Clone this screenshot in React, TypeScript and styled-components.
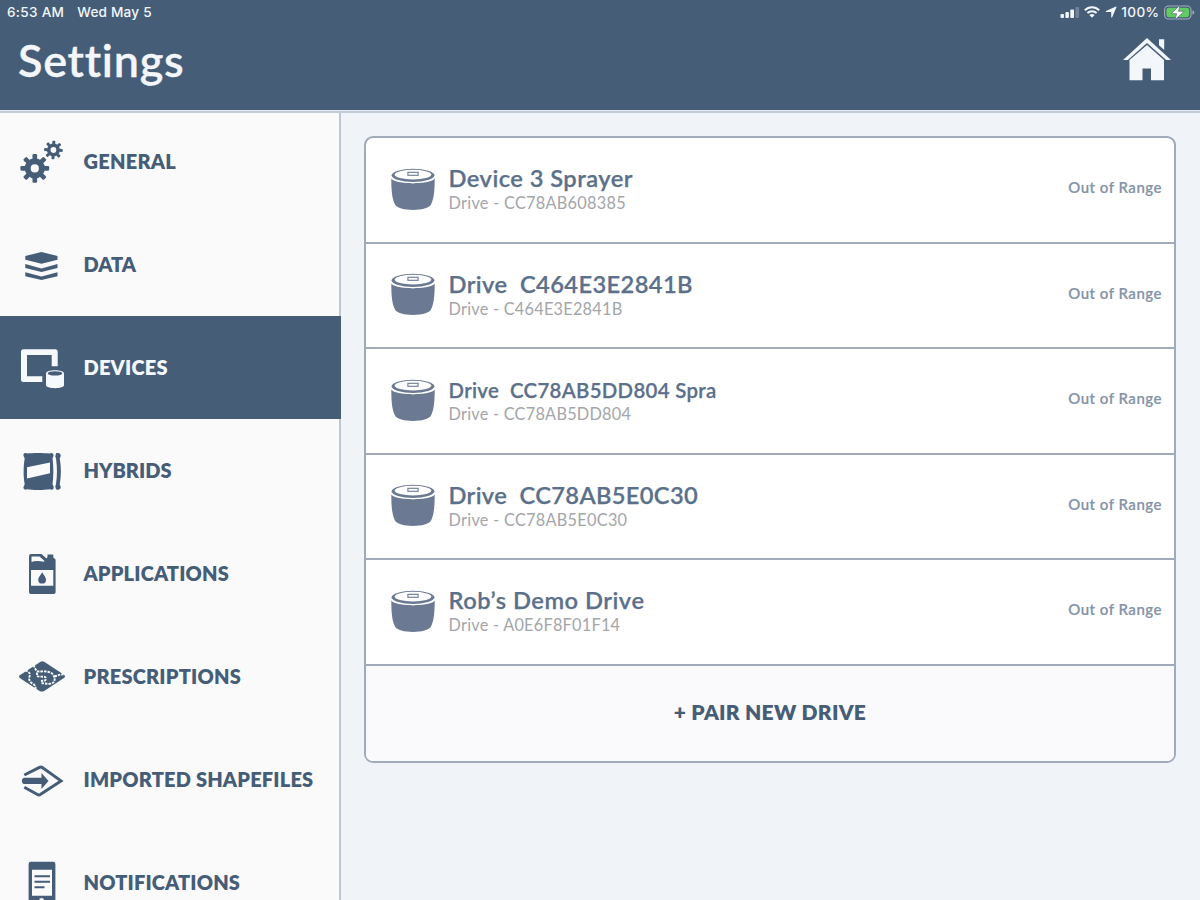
import React from "react";
import styled, { createGlobalStyle } from "styled-components";

const navy = "#465d78";
const slate = "#5b708b";
const line = "#a0aaba";

const GlobalStyle = createGlobalStyle`
  * { box-sizing: border-box; }
  html, body { margin: 0; padding: 0; }
  body { overflow: hidden; font-family: Lato, "Open Sans", sans-serif; }
  svg { display: block; }
`;

const Screen = styled.div`
  width: 1200px;
  height: 900px;
  display: flex;
  flex-direction: column;
  overflow: hidden;
  background: #f0f4f8;
`;

const Header = styled.header`
  position: relative;
  z-index: 1;
  flex: none;
  height: 110px;
  background: ${navy};
  color: #f3f7fc;
  box-shadow: 0 1px 0 #e6ebf2, 0 3px 0 #c3cbd6;
`;

const StatusBar = styled.div`
  height: 24px;
  padding: 0 5px 0 7px;
  display: flex;
  align-items: center;
  justify-content: space-between;
  font-family: Inter, "Liberation Sans", sans-serif;
  font-size: 13.6px;
  line-height: 24px;
  font-weight: 450;
`;

const StatusGroup = styled.div<{ $gap: number }>`
  display: flex;
  align-items: center;
  gap: ${(p) => p.$gap}px;
  white-space: pre;
`;

const StatusText = styled.span<{ $spacing: number }>`
  letter-spacing: ${(p) => p.$spacing}px;
`;

const TitleBar = styled.div`
  height: 72px;
  padding: 0 29px 0 18px;
  display: flex;
  align-items: center;
  justify-content: space-between;
`;

const Title = styled.h1`
  margin: 0;
  font-size: 45px;
  line-height: 73px;
  height: 73px;
  font-weight: 600;
  letter-spacing: 0.7px;
  -webkit-text-stroke: 0.3px currentColor;
`;

const Body = styled.div`
  flex: 1;
  min-height: 0;
  display: flex;
`;

const Sidebar = styled.nav`
  flex: none;
  width: 341px;
  height: 790px;
  overflow: hidden;
  background: linear-gradient(to right, #fafafb 339px, #bec7d3 339px);
`;

const NavItem = styled.div<{ $active?: boolean }>`
  height: 103.1px;
  padding-left: 17px;
  display: flex;
  align-items: center;
  gap: 18.5px;
  background: ${(p) => (p.$active ? navy : "transparent")};
  color: ${(p) => (p.$active ? "#f6f9fd" : navy)};
`;

const NavLabel = styled.span<{ $spacing: number }>`
  padding-bottom: 1.5px;
  font-size: 20px;
  line-height: 24px;
  font-weight: 800;
  white-space: nowrap;
  letter-spacing: ${(p) => p.$spacing}px;
`;

const Main = styled.main`
  flex: 1;
  padding: 26px 24px 0 23px;
`;

const Card = styled.section`
  height: 627px;
  border: 2px solid ${line};
  border-radius: 9px;
  overflow: hidden;
  background: #fff;
`;

const DriveRow = styled.div`
  height: 105.5px;
  padding: 0 12px 0 25px;
  display: flex;
  align-items: center;
  border-bottom: 2px solid ${line};
`;

const DriveText = styled.div`
  flex: 1;
  margin-left: 13.5px;
  padding-bottom: 1px;
`;

const DriveName = styled.div<{ $small?: boolean; $spacing: number }>`
  height: 28px;
  line-height: ${(p) => (p.$small ? 29 : 26)}px;
  font-size: ${(p) => (p.$small ? 20.4 : 23.7)}px;
  font-weight: 600;
  letter-spacing: ${(p) => p.$spacing}px;
  -webkit-text-stroke: 0.25px currentColor;
  color: ${slate};
  white-space: pre;
`;

const DriveId = styled.div<{ $spacing: number }>`
  height: 20px;
  line-height: 20px;
  font-size: 16.3px;
  letter-spacing: ${(p) => p.$spacing}px;
  color: #a3a6aa;
`;

const DriveStatus = styled.div`
  padding-bottom: 5.5px;
  font-size: 15px;
  line-height: 20px;
  font-weight: 600;
  letter-spacing: 0.5px;
  -webkit-text-stroke: 0.15px currentColor;
  color: #8593a8;
`;

const PairButton = styled.div`
  height: 96px;
  padding-bottom: 3.5px;
  display: flex;
  align-items: center;
  justify-content: center;
  background: #fafafc;
  color: ${navy};
  font-size: 21px;
  font-weight: 800;
  letter-spacing: 0.25px;
`;

const Gear = ({ x, y, r, hole, turn }: { x: number; y: number; r: number; hole: number; turn: number }) => {
  const body = r * 0.7;
  return (
    <g transform={`translate(${x} ${y}) rotate(${turn})`}>
      <circle r={(body + hole) / 2} fill="none" stroke="currentColor" strokeWidth={body - hole} />
      {[0, 45, 90, 135, 180, 225, 270, 315].map((a) => (
        <rect key={a} x={-r * 0.16} y={-r} width={r * 0.32} height={r * 0.4} rx={r * 0.08} fill="currentColor" transform={`rotate(${a})`} />
      ))}
    </g>
  );
};

const icons: Record<string, React.ReactNode> = {
  general: (
    <>
      <Gear x={17.8} y={30.4} r={14.4} hole={4.1} turn={0} />
      <Gear x={36.4} y={12} r={9.3} hole={2.9} turn={3} />
    </>
  ),
  data: (
    <g fill="currentColor">
      <path d="M8.3 14.9 24.5 11 40.5 14.9V18.7L24.5 22.8 8.3 18.7Z" />
      <path d="M8.3 23 24.5 27.4 40.5 23V27L24.5 31 8.3 27Z" />
      <path d="M8.3 31.2 24.5 35.6 40.5 31.2V35.3L24.5 39 8.3 35.3Z" />
    </g>
  ),
  devices: (
    <g fill="currentColor">
      <path d="M6.5 5.2H38.2Q40.7 5.2 40.7 7.7V22.3H34.7V11H10V32.2H25.3V37.9H6.5Q4 37.9 4 35.4V7.7Q4 5.2 6.5 5.2Z" />
      <path d="M29 29.5C29 25.3 47 25.3 47 29.5V41C47 45.2 29 45.2 29 41Z" />
      <ellipse cx="38" cy="29.4" rx="7.3" ry="2.2" fill={navy} />
    </g>
  ),
  hybrids: (
    <g fill="currentColor">
      <path
        fillRule="evenodd"
        d="M10 6.5C15 5.7 27 5.7 32.500 6.500C35 5 37.500 7 36.300 9.500L35.500 11.500C36.600 19 36.600 30 35.500 37.200L36.500 39.300C37.500 41.800 35.500 43.500 33 42.300C27 43.300 15 43.300 10 42.300C7.500 43.600 5.500 41.500 6.800 39.300L7.700 37.200C6.300 30 6.300 19 7.700 11.500L6.800 9.500C5.500 7 7.500 5.200 10 6.500ZM10 20.200V31.600L33 26.300V15.600Z"
      />
      <path d="M39 6.300C41.500 5 44.500 7 43.600 9.500L42.700 11.500C44.300 20 44.300 29 42.700 37.500L43.600 39.500C44.500 42 41.500 43.800 39 42.300L38.300 39.500 39 37C40.300 29 40.300 20 39 11.500L38.300 9.200Z" />
    </g>
  ),
  applications: (
    <g fill="currentColor">
      <path
        fillRule="evenodd"
        d="M14 4H24.500L29.500 8.500 30.500 7V4.500H36.300V7.500L38.600 9.500V42.200Q38.600 44 36.800 44H13.800Q12 44 12 42.200V6Q12 4 14 4ZM14.500 6.500V12Q19 10 27.300 11.800V10.700L22.500 6.500ZM14 20V35.800H36.300V20Z"
      />
      <path d="M25.200 22.300C27 25.500 29 27.300 29 29.700A3.900 3.900 0 0 1 21.200 29.700C21.200 27.300 23.400 25.500 25.200 22.300Z" />
    </g>
  ),
  prescriptions: (
    <>
      <path d="M23.500 8.700Q25.300 7.800 27.200 8.700L47.300 22.100Q48.800 23.500 47.300 24.800L27.200 37.900Q25 39.200 22.500 37.900L2.800 25Q1.200 23.500 2.800 22.200Z" fill="currentColor" />
      <g fill="none" stroke="#fafafb" strokeWidth="1.900" strokeDasharray="2.500 1">
        <path d="M8.500 17.300C12 19 13.700 20.500 12.500 23.500S13 29 15.500 30.500S19 34 18.500 37" />
        <path d="M16.500 12C18 15 19 18.500 22 18.500S33 17.500 36 21.500S38 30.500 33 30.800S26 29.500 24 30.500" />
        <path d="M20 19.500V23C23 24.500 29 22.500 29 25.500S26 27.500 24 28" />
        <path d="M37.500 23.300C40.500 23 43 21 46.500 21.500" />
      </g>
    </>
  ),
  shapefiles: (
    <>
      <path d="M7.300 19 22.500 11.400Q23.800 10.800 25 11.400L44 24.900 23.300 38.500Q22 39.300 20.500 38.500L7.300 31.200" fill="none" stroke="currentColor" strokeWidth="3" />
      <path d="M8 21.800H24.500V17L31.500 25 24.500 33V28H8A3.100 3.100 0 0 1 8 21.800Z" fill="currentColor" />
    </>
  ),
  notifications: (
    <g fill="currentColor">
      <path fillRule="evenodd" d="M14 2.700H36Q38.400 2.700 38.400 5V48H11.600V5Q11.600 2.700 14 2.700ZM15 10.700V36.800H35V10.700Z" />
      <path d="M17.500 16.300H33V18.300H17.500ZM17.500 21.800H33V23.800H17.500ZM17.500 27.300H27.500V29.300H17.500Z" />
      <circle cx="24.600" cy="41.500" r="2.500" fill="#fafafb" />
    </g>
  ),
};

const NavIcon = ({ name }: { name: string }) => (
  <svg width="48" height="48" viewBox="0 0 48 48" overflow="visible">
    {icons[name]}
  </svg>
);

const DriveIcon = () => (
  <svg width="44" height="44" viewBox="0 0 44 44">
    <path d="M0.300 10.500C3 16.700 41 16.700 43.700 10.500C43.700 22 43 31 40 36.500C37 43.700 7 43.700 4 36.500C1 31 0.300 22 0.300 10.500Z" fill="#6b7a92" />
    <ellipse cx="22" cy="8" rx="21.700" ry="7.200" fill="#fff" />
    <ellipse cx="22" cy="7.300" rx="21.400" ry="6.600" fill="#6b7a92" />
    <ellipse cx="22" cy="6.600" rx="18.300" ry="4.900" fill="#fff" />
    <rect x="16.900" y="4.300" width="10.200" height="3" fill="#fff" stroke="#6b7a92" strokeWidth="1.100" />
  </svg>
);

const HomeIcon = () => (
  <svg width="48" height="44" viewBox="0 0 48 44" fill="#f3f7fc">
    <path d="M24 0 48 22H43.200L24 5 4.800 22H0Z" />
    <path d="M24 7 41 22V42.300H28V30.500H19.500V42.300H6.500V22Z" />
    <path d="M36 1.300H41.200V12L36 7.300Z" />
  </svg>
);

const SignalIcon = () => (
  <svg width="20" height="11" viewBox="0 0 20 11" fill="#f3f7fc">
    <rect x="0.500" y="7" width="3.500" height="4" rx="0.900" />
    <rect x="5.400" y="5" width="3.500" height="6" rx="0.900" />
    <rect x="10.300" y="2.500" width="3.700" height="8.500" rx="0.900" />
    <rect x="15.400" y="0" width="3.700" height="11" rx="0.900" opacity="0.250" />
  </svg>
);

const WifiIcon = () => (
  <svg width="16" height="12" viewBox="0 0 16 12" fill="none" stroke="#f3f7fc" strokeWidth="2">
    <path d="M0.800 4.300C4.800 0.200 11.200 0.200 15.200 4.300" />
    <path d="M3.400 7C6 4.500 10 4.500 12.600 7" />
    <path d="M8 11.700 5.400 9.100C6.900 7.700 9.100 7.700 10.600 9.100Z" fill="#f3f7fc" stroke="none" />
  </svg>
);

const LocationIcon = () => (
  <svg width="12" height="12" viewBox="0 0 12 12" fill="#f3f7fc">
    <path d="M11 0.600Q11.700 0.500 11.400 1.200L7.200 11.200Q6.500 12 6.200 11V6H1.100Q0.200 5.800 1 5Z" />
  </svg>
);

const BatteryIcon = () => (
  <svg width="31" height="15" viewBox="0 0 31 15">
    <rect x="0.600" y="1" width="26.400" height="13" rx="4" fill="none" stroke="#a3b0c0" strokeWidth="1.100" />
    <rect x="2.400" y="2.800" width="22.800" height="9.400" rx="2.400" fill="#62cb61" />
    <path d="M28.500 5.300Q30.300 6 30.300 7.500T28.500 9.700Z" fill="#a3b0c0" />
    <path d="M16 0.200 7.200 8.700H12.700L11 14.800 20.200 6.300H14.500Z" fill="#fff" stroke={navy} strokeWidth="0.600" />
  </svg>
);

const navItems = [
  { icon: "general", label: "GENERAL", spacing: 0.25 },
  { icon: "data", label: "DATA", spacing: 0 },
  { icon: "devices", label: "DEVICES", spacing: 0.2, active: true },
  { icon: "hybrids", label: "HYBRIDS", spacing: 0 },
  { icon: "applications", label: "APPLICATIONS", spacing: 0.15 },
  { icon: "prescriptions", label: "PRESCRIPTIONS", spacing: 0.2 },
  { icon: "shapefiles", label: "IMPORTED SHAPEFILES", spacing: 0.18 },
  { icon: "notifications", label: "NOTIFICATIONS", spacing: 0.15 },
];

const drives = [
  { name: "Device 3 Sprayer", id: "CC78AB608385", spacing: 0.45, idSpacing: 0.28 },
  { name: "Drive  C464E3E2841B", id: "C464E3E2841B", spacing: 0.38, idSpacing: 0.25 },
  { name: "Drive  CC78AB5DD804 Spra", id: "CC78AB5DD804", spacing: 0.32, idSpacing: 0.25 },
  { name: "Drive  CC78AB5E0C30", id: "CC78AB5E0C30", spacing: 0.32, idSpacing: 0.28 },
  { name: "Rob’s Demo Drive", id: "A0E6F8F01F14", spacing: 0.5, idSpacing: 0.25 },
];

export default function App() {
  return (
    <>
      <GlobalStyle />
      <Screen>
        <Header>
          <StatusBar>
            <StatusGroup $gap={13}>
              <StatusText $spacing={0.28}>6:53 AM</StatusText>
              <StatusText $spacing={0.2}>Wed May 5</StatusText>
            </StatusGroup>
            <StatusGroup $gap={4.5}>
              <SignalIcon />
              <WifiIcon />
              <LocationIcon />
              <StatusText $spacing={0.4}>100%</StatusText>
              <BatteryIcon />
            </StatusGroup>
          </StatusBar>
          <TitleBar>
            <Title>Settings</Title>
            <HomeIcon />
          </TitleBar>
        </Header>
        <Body>
          <Sidebar>
            {navItems.map((item) => (
              <NavItem key={item.label} $active={item.active}>
                <NavIcon name={item.icon} />
                <NavLabel $spacing={item.spacing}>{item.label}</NavLabel>
              </NavItem>
            ))}
          </Sidebar>
          <Main>
            <Card>
              {drives.map((drive) => (
                <DriveRow key={drive.id}>
                  <DriveIcon />
                  <DriveText>
                    <DriveName $small={drive.name.length > 20} $spacing={drive.spacing}>{drive.name}</DriveName>
                    <DriveId $spacing={drive.idSpacing}>Drive - {drive.id}</DriveId>
                  </DriveText>
                  <DriveStatus>Out of Range</DriveStatus>
                </DriveRow>
              ))}
              <PairButton>+ PAIR NEW DRIVE</PairButton>
            </Card>
          </Main>
        </Body>
      </Screen>
    </>
  );
}
